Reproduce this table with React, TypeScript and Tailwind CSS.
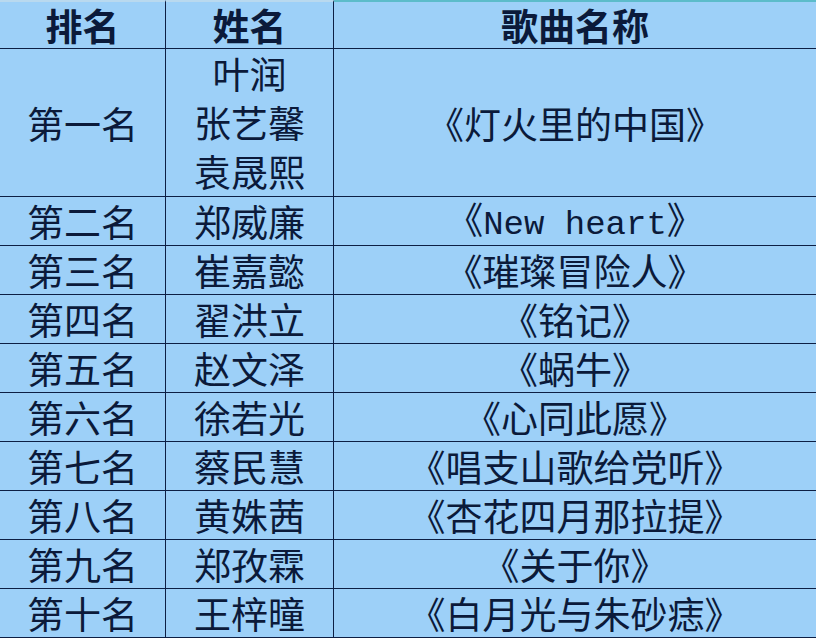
import React from "react";

const rows: { rank: string; names: string[]; song: React.ReactNode }[] = [
  { rank: "第一名", names: ["叶润", "张艺馨", "袁晟熙"], song: "《灯火里的中国》" },
  {
    rank: "第二名",
    names: ["郑威廉"],
    song: (
      <span>
        《<span className="font-['Liberation_Mono',monospace] text-[34px]">New heart</span>》
      </span>
    ),
  },
  { rank: "第三名", names: ["崔嘉懿"], song: "《璀璨冒险人》" },
  { rank: "第四名", names: ["翟洪立"], song: "《铭记》" },
  { rank: "第五名", names: ["赵文泽"], song: "《蜗牛》" },
  { rank: "第六名", names: ["徐若光"], song: "《心同此愿》" },
  { rank: "第七名", names: ["蔡民慧"], song: "《唱支山歌给党听》" },
  { rank: "第八名", names: ["黄姝茜"], song: "《杏花四月那拉提》" },
  { rank: "第九名", names: ["郑孜霖"], song: "《关于你》" },
  { rank: "第十名", names: ["王梓曈"], song: "《白月光与朱砂痣》" },
];

const cell = "flex flex-col items-center justify-center border-b border-[#0d1f44] leading-[46px] whitespace-nowrap";
const head = "border-t-2 border-b border-b-[#0d1f44] h-[49px] flex items-center justify-center font-bold leading-[46px]";

export default function App() {
  return (
    <div className="w-[816px] h-[640px] bg-white font-['Noto_Sans_CJK_SC',sans-serif] text-[37px] text-[#0b1a3a]">
      <div className="grid grid-cols-[166px_168px_1fr] bg-[#9dd0f8]">
        {/* 表头 */}
        <div className={`${head} border-t-[#b9d9ef] border-r border-r-[#0d1f44]`}>排名</div>
        <div className={`${head} border-t-[#b9d9ef] border-r border-r-[#0d1f44]`}>姓名</div>
        <div className={`${head} border-t-[#5cbcca]`}>歌曲名称</div>

        {rows.map((r) => {
          const h = r.names.length > 1 ? "h-[148px]" : "h-[49px]";
          return (
            <React.Fragment key={r.rank}>
              <div className={`${cell} ${h} border-r border-r-[#0d1f44]`}>{r.rank}</div>
              <div className={`${cell} ${h} border-r border-r-[#0d1f44]`}>
                {r.names.map((n) => (
                  <div key={n} className="leading-[49px]">{n}</div>
                ))}
              </div>
              <div className={`${cell} ${h}`}>{r.song}</div>
            </React.Fragment>
          );
        })}
      </div>
    </div>
  );
}
